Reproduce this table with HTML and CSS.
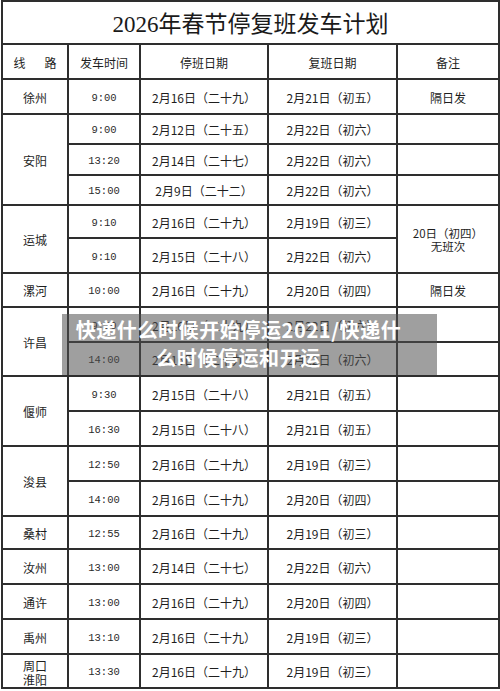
FILE: index.html
```html
<!DOCTYPE html>
<html lang="zh-CN">
<head>
<meta charset="utf-8">
<title>2026年春节停复班发车计划</title>
<link rel="stylesheet" href="styles.css">
</head>
<body>
<div class="page">
  <div class="sheet">
    <div class="c title">2026年春节停复班发车计划</div>

    <div class="c head"><span class="spread"><span>线</span><span>路</span></span></div>
    <div class="c head">发车时间</div>
    <div class="c head">停班日期</div>
    <div class="c head">复班日期</div>
    <div class="c head">备注</div>

    <div class="c">徐州</div>
    <div class="c t">9:00</div>
    <div class="c">2月16日（二十九）</div>
    <div class="c">2月21日（初五）</div>
    <div class="c note">隔日发</div>

    <div class="c span3">安阳</div>
    <div class="c t">9:00</div>
    <div class="c">2月12日（二十五）</div>
    <div class="c">2月22日（初六）</div>
    <div class="c"></div>
    <div class="c t">13:20</div>
    <div class="c">2月14日（二十七）</div>
    <div class="c">2月22日（初六）</div>
    <div class="c"></div>
    <div class="c t">15:00</div>
    <div class="c">2月9日（二十二）</div>
    <div class="c">2月22日（初六）</div>
    <div class="c"></div>

    <div class="c span2">运城</div>
    <div class="c t">9:10</div>
    <div class="c">2月16日（二十九）</div>
    <div class="c">2月19日（初三）</div>
    <div class="c span2 stack">20日（初四）<br>无班次</div>
    <div class="c t">9:10</div>
    <div class="c">2月15日（二十八）</div>
    <div class="c">2月22日（初六）</div>

    <div class="c">漯河</div>
    <div class="c t">10:00</div>
    <div class="c">2月16日（二十九）</div>
    <div class="c">2月20日（初四）</div>
    <div class="c note">隔日发</div>

    <div class="c span2">许昌</div>
    <div class="c t">9:20</div>
    <div class="c">2月16日（二十九）</div>
    <div class="c">2月22日（初六）</div>
    <div class="c"></div>
    <div class="c t">14:00</div>
    <div class="c">2月16日（二十九）</div>
    <div class="c">2月22日（初六）</div>
    <div class="c"></div>

    <div class="c span2">偃师</div>
    <div class="c t">9:30</div>
    <div class="c">2月15日（二十八）</div>
    <div class="c">2月21日（初五）</div>
    <div class="c"></div>
    <div class="c t">16:30</div>
    <div class="c">2月15日（二十八）</div>
    <div class="c">2月21日（初五）</div>
    <div class="c"></div>

    <div class="c span2">浚县</div>
    <div class="c t">12:50</div>
    <div class="c">2月16日（二十九）</div>
    <div class="c">2月19日（初三）</div>
    <div class="c"></div>
    <div class="c t">14:00</div>
    <div class="c">2月16日（二十九）</div>
    <div class="c">2月20日（初四）</div>
    <div class="c"></div>

    <div class="c">桑村</div>
    <div class="c t">12:55</div>
    <div class="c">2月16日（二十九）</div>
    <div class="c">2月19日（初三）</div>
    <div class="c"></div>

    <div class="c">汝州</div>
    <div class="c t">13:00</div>
    <div class="c">2月14日（二十七）</div>
    <div class="c">2月22日（初六）</div>
    <div class="c"></div>

    <div class="c">通许</div>
    <div class="c t">13:00</div>
    <div class="c">2月16日（二十九）</div>
    <div class="c">2月20日（初四）</div>
    <div class="c"></div>

    <div class="c">禹州</div>
    <div class="c t">13:10</div>
    <div class="c">2月16日（二十九）</div>
    <div class="c">2月19日（初三）</div>
    <div class="c"></div>

    <div class="c stack2">周口<br>淮阳</div>
    <div class="c t">13:30</div>
    <div class="c">2月16日（二十九）</div>
    <div class="c">2月19日（初三）</div>
    <div class="c"></div>
  </div>

  <div class="caption">快递什么时候开始停运2021/快递什么时候停运和开运</div>
</div>
</body>
</html>
```

FILE: styles.css
```css
html, body {
  margin: 0;
  padding: 0;
  background: #ffffff;
}

body {
  width: 500px;
  height: 691px;
  overflow: hidden;
  font-family: "Noto Sans CJK SC", "Noto Sans", sans-serif;
  color: #1e1e1e;
}

.page {
  position: relative;
  width: 500px;
  height: 691px;
}

.sheet {
  margin-left: 1px;
  width: 499px;
  box-sizing: border-box;
  padding: 2px;
  background: #2e2e2e;
  display: grid;
  gap: 2px;
  grid-template-columns: 64px 70px 126px 127px 100px;
  grid-template-rows: 41px 33px 33px 28px 29px 28px 31px 33px 32px 33px 32px 33px 33px 33px 33px 31px 33px 33px 33px 32px;
}

.c {
  background: #ffffff;
  display: flex;
  align-items: center;
  justify-content: center;
  text-align: center;
  font-size: 12px;
  line-height: 14px;
  padding-top: 2px;
  box-sizing: border-box;
  white-space: nowrap;
}

.title {
  grid-column: 1 / -1;
  font-family: "Liberation Serif", "Noto Sans CJK SC", serif;
  font-size: 23px;
  font-weight: 400;
  color: #1a1a1a;
  padding-top: 5px;
}

.head {
  font-size: 12px;
}

.spread {
  display: flex;
  gap: 19px;
}

.t {
  font-family: "Liberation Mono", "DejaVu Sans Mono", monospace;
  font-size: 10.5px;
  color: #2a2a2a;
}

.span2 {
  grid-row: span 2;
}

.span3 {
  grid-row: span 3;
}

.stack {
  line-height: 13px;
  font-size: 11.5px;
}

.stack2 {
  line-height: 14px;
  font-size: 12px;
  padding-top: 4px;
}

.caption {
  position: absolute;
  left: 62px;
  top: 314px;
  width: 375px;
  height: 61px;
  box-sizing: border-box;
  padding: 2px 30px 0 8px;
  background: rgba(80, 80, 80, 0.55);
  color: #ffffff;
  font-family: "Noto Sans CJK SC", sans-serif;
  font-weight: 700;
  font-size: 20px;
  letter-spacing: 0.6px;
  line-height: 28px;
  text-align: center;
  word-break: break-all;
}
```
